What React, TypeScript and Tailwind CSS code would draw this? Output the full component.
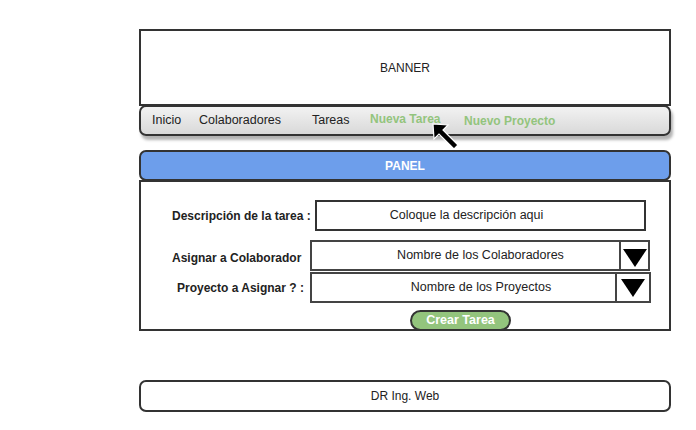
import React from "react";

function Arrow() {
  return (
    <svg width="26" height="20" viewBox="0 0 26 20">
      <polygon points="1,1 25,1 13,19" fill="#000" />
    </svg>
  );
}

function Cursor() {
  return (
    <svg width="32" height="32" viewBox="0 0 32 32" className="absolute left-[430px] top-[120px]">
      <polygon
        points="3,4 18,5 13,10 28,25 24,29 9,14 4,19"
        fill="#000"
        stroke="#fff"
        strokeWidth="1.2"
      />
    </svg>
  );
}

export default function App() {
  return (
    <main
      className="relative w-[696px] h-[430px] bg-white text-[12px] text-[#222]"
      style={{ fontFamily: '"Liberation Sans", Arial, sans-serif' }}
    >
      <div className="flex flex-col w-[532px] ml-[139px] pt-[29px]">
        {/* Banner */}
        <div className="h-[77px] border-2 border-[#333] flex items-center justify-center">
          BANNER
        </div>

        {/* Nav */}
        <nav className="h-[31px] -mt-px border-2 border-[#333] rounded-[7px] bg-gradient-to-b from-[#f2f2f2] to-[#d9d9d9] shadow-[2px_4px_3px_rgba(0,0,0,0.3)] flex items-center pl-[11px] text-[12.5px]">
          <span className="w-[47px]">Inicio</span>
          <span className="w-[113px]">Colaboradores</span>
          <span className="w-[58px]">Tareas</span>
          <span className="w-[94px] -mt-[4px] text-[12px] font-bold text-[#93c47d]">Nueva Tarea</span>
          <span className="text-[12px] font-bold text-[#93c47d]">Nuevo Proyecto</span>
        </nav>

        {/* Panel header */}
        <div className="h-[31px] mt-[14px] border-2 border-[#333] rounded-[7px] bg-[#6d9eeb] flex items-center justify-center text-white font-bold">
          PANEL
        </div>

        {/* Form */}
        <div className="h-[151px] -mt-px border-2 border-[#333] flex flex-col pt-[18px]">
          <div className="flex items-center pl-[31px]">
            <span className="font-bold w-[143px]">Descripción de la tarea :</span>
            <div className="w-[331px] h-[31px] border-2 border-[#333] flex items-center justify-center pr-[28px] text-[12.5px]">
              Coloque la descripción aqui
            </div>
          </div>

          <div className="flex items-center pl-[31px] mt-[9px]">
            <span className="font-bold w-[138px] mt-[4px]">Asignar a Colaborador</span>
            <div className="w-[311px] h-[31px] border-2 border-[#444] flex items-center justify-center pl-[30px] text-[12.5px]">
              <span className="whitespace-nowrap">Nombre de los Colaboradores</span>
            </div>
            <div className="w-[31px] h-[31px] -ml-[2px] border-2 border-[#444] flex items-end justify-center pb-[1px]">
              <Arrow />
            </div>
          </div>

          <div className="flex items-center pl-[36px] mt-px">
            <span className="font-bold w-[133px]">Proyecto a Asignar ? :</span>
            <div className="w-[307px] h-[31px] border-2 border-[#444] flex items-center justify-center pl-[35px] text-[12.5px]">
              <span className="whitespace-nowrap">Nombre de los Proyectos</span>
            </div>
            <div className="w-[36px] h-[31px] -ml-[2px] border-2 border-[#444] flex items-center justify-center">
              <Arrow />
            </div>
          </div>

          <div className="flex pl-[269px] mt-[7px]">
            <button className="w-[101px] h-[21px] rounded-full border-2 border-[#333] bg-[#93c47d] text-white text-[12.5px] font-bold flex items-center justify-center">
              Crear Tarea
            </button>
          </div>
        </div>

        {/* Footer */}
        <div className="h-[32px] mt-[49px] border-2 border-[#333] rounded-[7px] flex items-center justify-center">
          DR Ing. Web
        </div>
      </div>

      <Cursor />
    </main>
  );
}
